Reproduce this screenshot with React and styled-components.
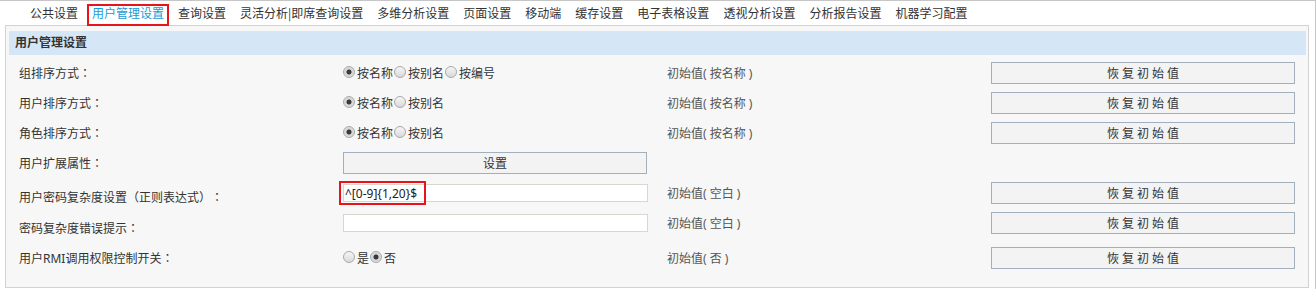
import React from 'react';
import styled, { createGlobalStyle } from 'styled-components';

const FONT = `"Noto Sans", "Noto Sans CJK SC", sans-serif`;

const Global = createGlobalStyle`
  html, body { margin: 0; padding: 0; background: #fff; }
  body {
    font-family: ${FONT};
    font-size: 12px;
    color: #333;
    text-spacing-trim: space-all;
  }
  * { box-sizing: border-box; }
`;

const Frame = styled.div`
  width: 1316px;
  height: 289px;
  border-top: 1px solid #c6c6c6;
  border-right: 1px solid #c6c6c6;
  background: #fff;
  overflow: hidden;
`;

const TabBar = styled.div`
  display: flex;
  align-items: center;
  gap: 14px;
  height: 24px;
  padding-left: 30px;
`;

const Tab = styled.span`
  position: relative;
  font-family: "Noto Sans CJK SC", sans-serif;
  font-size: 12px;
  line-height: 16px;
  white-space: nowrap;
  color: ${p => (p.$active ? '#1b9ad6' : '#333')};
  cursor: pointer;
  ${p =>
    p.$active &&
    `
    &::after {
      content: '';
      position: absolute;
      left: -5px;
      right: -5px;
      top: -1px;
      bottom: -5px;
      border: 2px solid #e8141b;
    }
  `}
`;

const Panel = styled.div`
  margin-left: 5px;
  width: 1304px;
  height: 263px;
  border: 1px solid #d2d2d2;
  background: #f7f7f7;
`;

const Header = styled.div`
  margin: 5px 2px 0 3px;
  height: 24px;
  line-height: 24px;
  padding-left: 6px;
  background: #d5e6f6;
  font-weight: bold;
  color: #333;
`;

const Body = styled.div`
  padding: 3px 0 0 13px;
`;

const Row = styled.div`
  display: grid;
  grid-template-columns: 324px 324px 324px 304px;
  align-items: center;
  height: ${p => p.$h || 30}px;
`;

const Label = styled.div`
  color: #333;
  white-space: nowrap;
  padding-top: ${p => (p.$drop || 0) * 2}px;
`;

const Punct = styled.span`
  font-family: "Noto Sans CJK TC", "Noto Sans CJK SC", sans-serif;
`;

const Control = styled.div`
  position: relative;
  display: flex;
  align-items: center;
`;

const RadioItem = styled.label`
  display: inline-flex;
  align-items: center;
  margin-right: 1px;
  color: #333;
  white-space: nowrap;
`;

const Radio = styled.input.attrs({ type: 'radio' })`
  appearance: none;
  -webkit-appearance: none;
  width: 12px;
  height: 12px;
  margin: 0 2px 3px 0;
  border-radius: 50%;
  border: 1px solid #a9a9a9;
  background: linear-gradient(#f6f6f6, #d9d9d9);
  &:checked {
    background: radial-gradient(circle, #3a3a3a 0 2.2px, #cfcfcf 2.8px, #ececec 100%);
  }
`;

const TextInput = styled.input.attrs({ type: 'text' })`
  width: 305px;
  height: 18px;
  border: 1px solid #d9d6cd;
  background: #fff;
  padding: 0 1px;
  font-family: ${FONT};
  font-size: 12px;
  color: #222;
  outline: none;
`;

const Highlight = styled.div`
  position: absolute;
  left: -4px;
  top: -3px;
  width: 87px;
  height: 24px;
  border: 2px solid #e8141b;
  pointer-events: none;
`;

const Btn = styled.button`
  width: ${p => p.$w || 304}px;
  height: 22px;
  border: 1px solid #a3afbd;
  background: #f3f3f3;
  font-family: ${FONT};
  font-size: 12px;
  color: #333;
  letter-spacing: ${p => (p.$spaced ? 3 : 0)}px;
  padding: 0 0 0 ${p => (p.$spaced ? 3 : 0)}px;
  cursor: pointer;
`;

const Init = styled.div`
  color: #555;
  white-space: nowrap;
`;

const tabs = [
  '公共设置',
  '用户管理设置',
  '查询设置',
  '灵活分析|即席查询设置',
  '多维分析设置',
  '页面设置',
  '移动端',
  '缓存设置',
  '电子表格设置',
  '透视分析设置',
  '分析报告设置',
  '机器学习配置',
];

function RadioGroup({ name, options, checked }) {
  return (
    <Control>
      {options.map((o, i) => (
        <RadioItem key={o}>
          <Radio name={name} defaultChecked={i === checked} />
          {o}
        </RadioItem>
      ))}
    </Control>
  );
}

function ResetButton() {
  return <Btn $spaced>恢复初始值</Btn>;
}

function FieldLabel({ children, drop }) {
  return (
    <Label $drop={drop}>
      {children}
      <Punct>：</Punct>
    </Label>
  );
}

export default function App() {
  return (
    <>
      <Global />
      <Frame>
        <TabBar>
          {tabs.map(t => (
            <Tab key={t} $active={t === '用户管理设置'}>
              {t}
            </Tab>
          ))}
        </TabBar>
        <Panel>
          <Header>用户管理设置</Header>
          <Body>
            <Row>
              <FieldLabel>组排序方式</FieldLabel>
              <RadioGroup name="g" options={['按名称', '按别名', '按编号']} checked={0} />
              <Init>初始值( 按名称 )</Init>
              <ResetButton />
            </Row>
            <Row>
              <FieldLabel>用户排序方式</FieldLabel>
              <RadioGroup name="u" options={['按名称', '按别名']} checked={0} />
              <Init>初始值( 按名称 )</Init>
              <ResetButton />
            </Row>
            <Row>
              <FieldLabel>角色排序方式</FieldLabel>
              <RadioGroup name="r" options={['按名称', '按别名']} checked={0} />
              <Init>初始值( 按名称 )</Init>
              <ResetButton />
            </Row>
            <Row>
              <FieldLabel>用户扩展属性</FieldLabel>
              <Control>
                <Btn $w={304}>设置</Btn>
              </Control>
              <div />
              <div />
            </Row>
            <Row>
              <FieldLabel drop={4}>
                用户密码复杂度设置<Punct>（</Punct>正则表达式<Punct>）</Punct>
              </FieldLabel>
              <Control>
                <TextInput defaultValue="^[0-9]{1,20}$" />
                <Highlight />
              </Control>
              <Init>初始值( 空白 )</Init>
              <ResetButton />
            </Row>
            <Row>
              <FieldLabel drop={5}>密码复杂度错误提示</FieldLabel>
              <Control>
                <TextInput defaultValue="" />
              </Control>
              <Init>初始值( 空白 )</Init>
              <ResetButton />
            </Row>
            <Row $h={40}>
              <FieldLabel>用户RMI调用权限控制开关</FieldLabel>
              <RadioGroup name="rmi" options={['是', '否']} checked={1} />
              <Init>初始值( 否 )</Init>
              <ResetButton />
            </Row>
          </Body>
        </Panel>
      </Frame>
    </>
  );
}
